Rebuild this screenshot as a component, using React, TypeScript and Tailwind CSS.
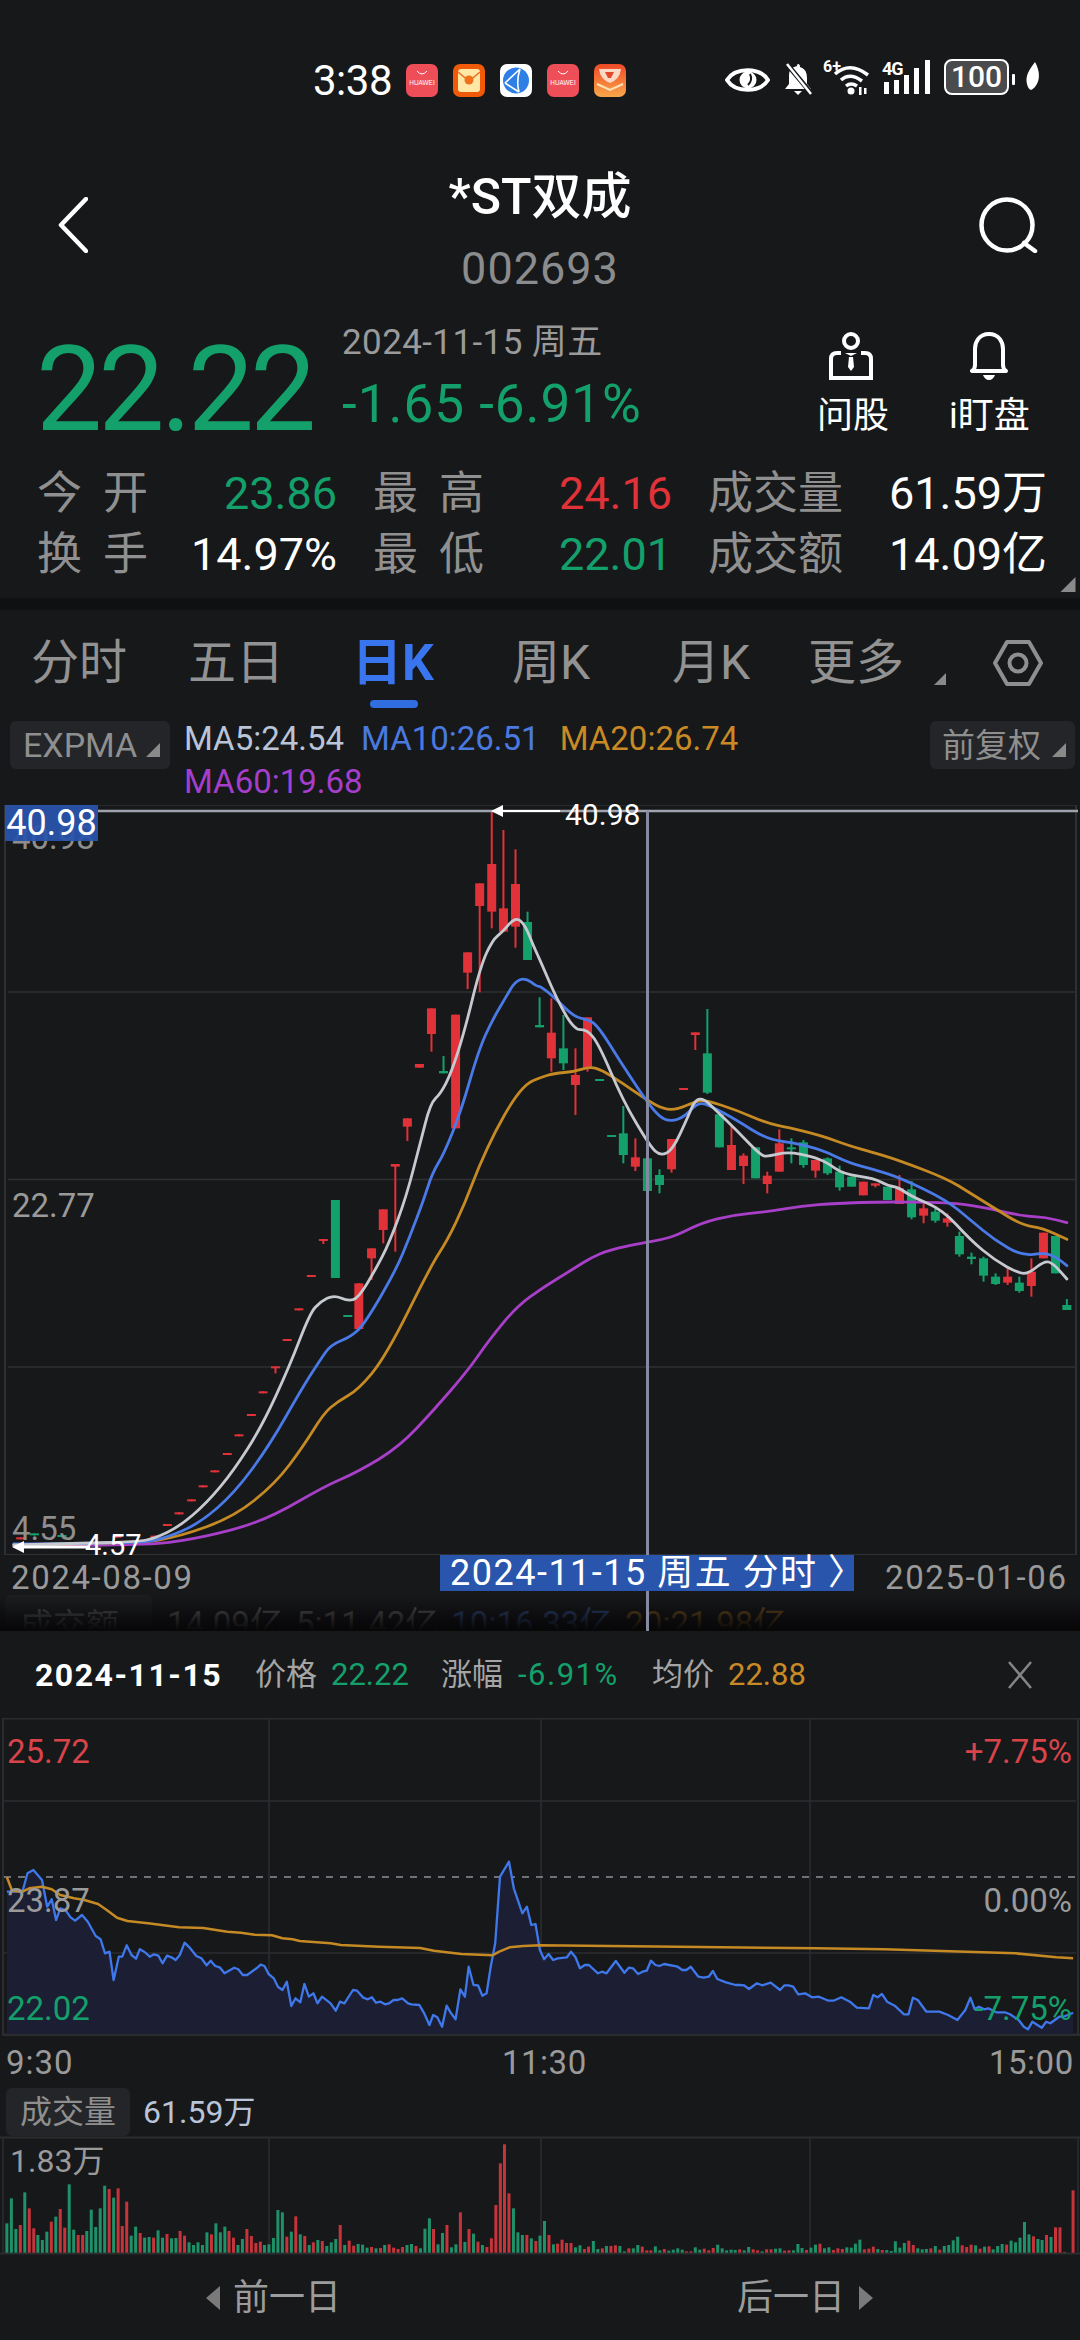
import React from "react";

type P = [number, number];
const Z3 = (x: number, y: number): P => [x / 2.904, 790 + y / 3];
const Z4 = (x: number, y: number): P => [540 + x / 2.904, 900 + y / 3];
const Z5 = (x: number, y: number): P => [x / 1.452, 1270 + y / 3];
const pts = (f: (x: number, y: number) => P, a: number[][]) => a.map(([x, y]) => f(x, y));

const smooth = (p: P[]) => {
  let d = `M${p[0][0].toFixed(1)} ${p[0][1].toFixed(1)}`;
  for (let i = 1; i < p.length - 1; i++) {
    const mx = (p[i][0] + p[i + 1][0]) / 2;
    const my = (p[i][1] + p[i + 1][1]) / 2;
    d += `Q${p[i][0].toFixed(1)} ${p[i][1].toFixed(1)} ${mx.toFixed(1)} ${my.toFixed(1)}`;
  }
  const l = p[p.length - 1];
  return d + `L${l[0].toFixed(1)} ${l[1].toFixed(1)}`;
};
const poly = (p: P[]) => "M" + p.map((q) => `${q[0].toFixed(1)} ${q[1].toFixed(1)}`).join("L");

const white = [
  ...pts(Z5, [[20,825],[120,820],[200,815],[225,805],[260,770],[300,700],[340,600],[380,470],[420,290],[450,130],[465,95],[485,75],[505,93],[520,85]]),
  ...pts(Z3, [[1090,1440],[1130,1360],[1180,1220],[1220,1060],[1250,940],[1280,910],[1310,850],[1350,720],[1395,530],[1430,450],[1460,425],[1497,380],[1525,405],[1550,470]]),
  ...pts(Z4, [[0,180],[50,300],[100,390],[135,388],[170,430],[240,600],[320,740],[350,768],[385,750],[430,650],[450,600],[475,595],[510,630],[570,690],[640,765],[660,770],[720,755],[790,770],[830,785],[880,822],[970,835],[1010,857],[1040,862],[1080,890],[1170,930],[1250,1020],[1320,1080],[1390,1120],[1420,1120],[1465,1082],[1490,1090],[1530,1137]]),
];
const blue = [
  ...pts(Z5, [[20,822],[200,820],[240,805],[290,760],[340,670],[390,530],[440,350],[465,270],[480,225],[510,200],[530,160]]),
  ...pts(Z3, [[1150,1440],[1190,1340],[1230,1230],[1255,1150],[1290,1090],[1340,960],[1390,780],[1430,690],[1470,620],[1495,575],[1525,563],[1560,590]]),
  ...pts(Z4, [[0,258],[40,290],[100,352],[140,358],[170,380],[230,480],[300,590],[345,650],[380,665],[420,650],[460,605],[500,620],[570,660],[660,718],[730,727],[820,750],[900,790],[970,808],[1050,835],[1180,900],[1250,960],[1320,1020],[1400,1068],[1465,1058],[1500,1072],[1530,1097]]),
];
const orange = [
  ...pts(Z5, [[20,825],[200,820],[260,800],[340,740],[400,640],[440,530],[470,430],[490,395],[520,360],[560,260]]),
  ...pts(Z3, [[1250,1430],[1300,1350],[1350,1240],[1390,1130],[1440,1020],[1490,930],[1530,880]]),
  ...pts(Z4, [[0,533],[40,520],[100,515],[145,500],[180,510],[240,550],[310,600],[360,628],[400,628],[450,605],[480,600],[570,630],[660,670],[720,682],[820,708],[900,738],[960,755],[1040,780],[1180,835],[1250,880],[1320,925],[1400,975],[1460,985],[1530,1018]]),
];
const purple = [
  ...pts(Z5, [[20,828],[200,825],[260,815],[340,780],[400,735],[470,650],[520,605],[580,530],[630,420],[680,300],[710,210],[750,110],[790,50]]),
  ...pts(Z4, [[100,1105],[150,1072],[200,1050],[300,1028],[350,1020],[400,1005],[470,968],[560,945],[660,935],[760,918],[860,910],[1000,905],[1190,908],[1280,920],[1400,948],[1470,952],[1530,968]]),
];

// colour, centre, wick top, body top, body bottom, wick bottom
type C = ["r" | "g", number, number, number, number, number];
const c3: C[] = [
  ["r",1428,65,222,365,415],["r",1393,280,280,348,607],["r",1462,120,355,425,425],["r",1497,178,282,410,473],
  ["g",1532,365,396,510,510],["r",1358,487,487,548,597],["r",1253,655,655,732,785],["r",1323,674,674,1015,1015],
  ["r",1218,822,822,833,833],["g",1288,798,843,850,850],["r",1183,985,985,1010,1053],["r",1148,1122,1122,1130,1385],
  ["r",1113,1258,1258,1320,1360],["r",1079,1375,1375,1405,1470],["g",974,1230,1230,1464,1464],["r",939,1347,1347,1352,1362],
  ["g",1567,622,705,712,712],
];
const c4: C[] = [
  ["r",33,295,398,475,515],["g",68,345,445,490,510],["r",103,445,525,555,645],["r",138,352,352,505,515],
  ["g",173,537,537,543,543],["g",208,705,705,711,711],["g",242,618,700,765,790],["r",277,715,772,800,813],
  ["g",312,775,775,873,873],["g",347,808,825,855,880],["r",382,717,717,808,818],["r",417,564,564,570,570],
  ["r",451,397,397,405,450],["g",486,327,460,578,582],["g",521,643,643,742,742],["r",556,675,735,810,810],
  ["r",591,760,767,798,852],["g",626,742,742,835,835],["r",660,815,827,852,880],["r",695,688,730,815,815],
  ["g",730,715,742,748,790],["g",765,720,727,795,803],["r",800,780,780,812,833],["g",835,772,775,820,825],
  ["g",870,797,815,862,872],["g",905,830,830,860,860],["r",939,845,845,886,886],["r",974,850,850,857,862],
  ["g",1009,860,860,900,900],["r",1044,825,865,912,912],["g",1079,843,868,952,958],["r",1114,910,925,947,970],
  ["g",1148,925,935,962,968],["r",1183,940,955,968,980],["g",1218,995,1008,1063,1070],["g",1253,1058,1070,1077,1093],
  ["g",1288,1070,1075,1127,1145],["g",1323,1120,1130,1152,1155],["r",1358,1105,1130,1148,1155],["g",1392,1130,1148,1173,1178],
  ["r",1427,1075,1115,1158,1190],["r",1462,998,998,1075,1075],["g",1497,1008,1008,1120,1120],["g",1530,1197,1215,1230,1230],
];
const c5: C[] = [
  ["r",521,40,40,177,177],["g",505,135,135,141,141],["r",452,15,15,21,21],["r",434,115,115,121,121],["r",417,207,207,213,213],
  ["r",400,289,289,295,310],["r",382,364,364,370,370],["r",365,432,432,438,438],["r",347,493,493,499,499],["r",330,549,549,555,555],
  ["r",312,601,601,607,607],["r",295,646,646,652,652],["r",278,688,688,694,694],["r",260,727,727,733,733],["r",243,762,762,768,768],
  ["r",225,797,797,803,803],["r",208,815,815,821,821],["r",170,797,797,803,803],["g",90,795,795,801,801],["g",50,790,790,796,796],["r",30,802,802,808,808],
];
const candles = [
  ...c3.map((c) => ({ c, f: Z3 })),
  ...c4.map((c) => ({ c, f: Z4 })),
  ...c5.map((c) => ({ c, f: Z5 })),
].map(({ c, f }) => {
  const [cx, wt] = f(c[1], c[2]);
  return { col: c[0] === "r" ? "#e03238" : "#13a06b", cx, wt, bt: f(0, c[3])[1], bb: f(0, c[4])[1], wb: f(0, c[5])[1] };
});

const blueIntra = [
  ...pts((x, y) => [x / 2.904, 1860 + y / 3], [[20,95],[40,95],[65,95],[80,40],[97,30],[122,60],[137,140],[150,118],[163,180],[175,145],[190,150],[205,172],[218,182],[238,165],[255,185],[278,228],[292,238],[305,280],[318,275],[330,360],[345,290],[355,290],[368,256],[382,285],[395,296],[406,268],[420,276],[435,290],[447,283],[460,287],[472,310],[485,287],[498,292],[510,300],[522,285],[536,248],[550,262],[570,288],[585,295],[600,316],[612,302],[625,318],[638,322],[652,340],[680,323],[692,328],[705,345],[718,345],[745,325],[757,314],[768,318],[780,342],[795,355],[807,380],[820,390],[833,365],[846,438],[858,415],[872,427],[884,372],[897,410],[910,400],[922,430],[935,410],[960,430],[975,452],[987,425],[1000,430],[1025,390],[1037,392],[1055,413],[1068,418],[1080,412],[1092,428],[1105,425],[1118,433],[1130,430],[1143,420],[1155,420],[1168,415],[1185,430],[1195,433],[1218,435],[1232,460],[1247,495],[1258,465],[1270,472],[1284,500],[1297,437],[1310,460],[1323,478],[1337,388],[1350,410],[1361,320],[1375,375],[1388,376],[1401,407],[1413,400],[1425,320],[1438,250],[1452,50],[1478,5],[1492,85],[1517,160],[1530,140],[1543,195],[1555,192],[1568,270]]),
  ...pts((x, y) => [540 + x / 2.904, 1860 + y / 3], [[12,298],[25,282],[38,300],[52,295],[78,292],[90,275],[103,292],[116,325],[130,315],[142,315],[168,340],[180,335],[193,340],[220,303],[245,338],[258,323],[270,325],[285,342],[298,335],[310,332],[322,302],[335,315],[347,318],[360,312],[400,320],[413,330],[425,330],[438,320],[460,350],[475,353],[490,350],[502,333],[515,357],[540,367],[568,375],[580,375],[592,376],[607,387],[630,370],[645,376],[670,368],[697,390],[710,376],[722,376],[735,380],[750,403],[770,400],[790,412],[810,410],[838,422],[852,422],[875,412],[900,425],[920,443],[955,445],[968,405],[980,412],[993,402],[1008,425],[1030,437],[1057,463],[1070,463],[1083,413],[1097,420],[1122,455],[1160,455],[1185,465],[1212,480],[1235,450],[1250,413],[1262,447],[1275,440],[1290,448],[1302,445],[1325,457],[1350,457],[1365,463],[1390,480],[1405,500],[1417,508],[1430,485],[1457,503],[1470,485],[1482,490],[1508,470],[1520,470],[1548,458]]),
];
const orangeIntra = [
  ...pts((x, y) => [x / 2.904, 1860 + y / 3], [[20,52],[35,92],[65,95],[85,85],[122,80],[150,88],[175,105],[215,115],[245,120],[285,132],[310,150],[340,173],[370,183],[430,190],[520,202],[590,204],[660,215],[700,218],[740,224],[790,226],[820,235],[850,238],[870,243],[960,250],[990,255],[1100,260],[1220,264],[1260,272],[1340,282],[1430,286],[1450,275],[1480,262],[1520,258],[1568,256]]),
  ...pts((x, y) => [540 + x / 2.904, 1860 + y / 3], [[400,260],[800,265],[1000,268],[1380,280],[1500,292],[1548,295]]),
];

const volL = "20g265 33g190 46g282 59r270 72g172 85r220 98r280 110g300 123g315 136g290 149r260 162g245 175r222 188r278 201g148 214g284 227r300 240r300 252g288 265g224 278g276 291g220 304g152 317r162 330g188 343r160 355r273 368r200 381g302 394g275 407r294 420g308 433g306 446r308 459g286 472g308 485r297 498g310 511g309 523r288 536r302 549g322 562g330 575g322 588g330 601g292 614r298 627g265 640g292 653g275 665r288 678r308 691g330 704g312 717r282 730r303 743r324 756r320 768g330 781g328 794g309 807g225 820g232 833r305 846g290 859r244 872g298 885r303 898g330 910r322 923g315 936r318 949g333 962g322 975g312 988r270 1001g330 1014r317 1027r332 1040g327 1053g329 1066g338 1079r336 1092g340 1105r339 1117g330 1130r328 1143r338 1156r342 1169r336 1182g330 1195g327 1208r333 1221g340 1234g281 1247g250 1259r282 1272g328 1285g294 1298r270 1311g337 1324g328 1337r232 1350g321 1362r282 1375g296 1388r320 1401g330 1414r336 1427r310 1440r210 1453r85 1465r28 1478r175 1491g220 1504g292 1517g300 1530r300 1543g310 1556r318";
const volR = "0g302 13g258 26r300 39g328 51r326 64r314 77r324 90r324 103g337 116g331 129r342 141r335 155g318 168g342 181r340 193g333 206r333 219r331 232g333 245g349 258r340 271g340 284g330 297r335 310r346 322r346 335g334 348g346 361r342 374g347 387g344 400g340 413g344 425r349 438r349 451g337 464g344 477r341 490r346 503r339 516g329 529g340 542g346 555g344 567g345 580r343 593g346 606g336 619r343 632r346 645g349 658r343 671r343 684g341 697g340 710r347 723r346 736g346 749g327 761g339 774r345 787g338 800g329 813r326 826g340 839g337 852r345 865r340 878r342 891g337 904g338 916g326 929g314 942r343 955r341 968r335 981g342 994r345 1007g345 1020g348 1032g319 1045g338 1058g324 1071r317 1084r330 1097g340 1110g343 1122g342 1135r340 1148g333 1161r344 1174g333 1187g330 1200g316 1213g305 1226r331 1239r336 1252r329 1265g331 1278r341 1291g335 1304r334 1316g343 1329g333 1342g327 1355r329 1368g317 1381g322 1394g308 1407g261 1420g298 1433r304 1446g312 1458g315 1471r300 1484g306 1497r277 1510r277 1523r351 1548r166";
const parseVol = (s: string, off: number) =>
  s.split(" ").map((t) => {
    const m = t.match(/(\d+)([rg])(\d+)/)!;
    return { x: off + Number(m[1]) / 2.904, col: m[2] === "r" ? "#c5343b" : "#1f9169", y: 2135 + Number(m[3]) / 3 };
  });
const vols = [...parseVol(volL, 0), ...parseVol(volR, 540)];

const Corner = ({ className }: { className: string }) => (
  <svg viewBox="0 0 14 14" className={className}><path d="M14 0V14H0Z" fill="#8a8a8a" /></svg>
);

const Huawei = () => (
  <svg viewBox="0 0 32 33" className="h-[33px] w-[32px]">
    <rect width="32" height="33" rx="7" fill="#ee4e58" />
    <path d="M11 7q5 6 10 0" stroke="#fff" strokeWidth="1" fill="none" />
    <text x="16" y="21" fontSize="6.4" fill="#fff" textAnchor="middle" fontFamily="Liberation Sans, sans-serif">HUAWEI</text>
  </svg>
);

const StatusBar = () => (
  <div className="flex h-[130px] items-start pl-[313px] pt-[62px]">
    <span className="w-[93px] shrink-0 text-[42px] leading-[38px] tracking-[-0.5px] text-white">3:38</span>
    <div className="flex w-[319px] shrink-0 gap-[15px] pt-[2px]">
      <Huawei />
      <svg viewBox="0 0 32 33" className="h-[33px] w-[32px]">
        <rect width="32" height="33" rx="7" fill="#f05a08" />
        <rect x="5" y="5" width="22" height="23" rx="3" fill="#ffe7a6" />
        <path d="M5 8l11 9 11-9" stroke="#e96c1c" strokeWidth="1.4" fill="none" />
        <circle cx="16" cy="16" r="4.5" fill="#f0701c" />
      </svg>
      <svg viewBox="0 0 32 33" className="h-[33px] w-[32px]">
        <rect width="32" height="33" rx="7" fill="#fff" />
        <circle cx="16" cy="16.500" r="13" fill="#2f80e6" />
        <path d="M5 19l15-14M5 19l14 9M20 5q-4 12 -1 23" stroke="#fff" strokeWidth="1.6" fill="none" />
      </svg>
      <Huawei />
      <svg viewBox="0 0 32 33" className="h-[33px] w-[32px]">
        <defs><linearGradient id="sg" x1="0" y1="0" x2="0" y2="1"><stop offset="0" stopColor="#ee4a26" /><stop offset="1" stopColor="#f9a74a" /></linearGradient></defs>
        <rect width="32" height="33" rx="7" fill="url(#sg)" />
        <path d="M5 5h22q-1 10-11 14Q6 15 5 5Z" fill="#fbd9c4" />
        <path d="M11 8h9l-3 6h-3Z" fill="#e2482a" />
        <path d="M3 20l13 6 13-6" stroke="#ffe3b8" strokeWidth="2" fill="none" />
      </svg>
    </div>
    <svg viewBox="0 0 45 30" className="mt-[3px] h-[30px] w-[45px] shrink-0">
      <path d="M2 15C10 2 35 2 43 15 35 28 10 28 2 15Z" fill="none" stroke="#fff" strokeWidth="4" />
      <circle cx="23" cy="15" r="8.500" fill="#fff" />
      <path d="M25 9q3 6 -2 11" stroke="#17181a" strokeWidth="2" fill="none" />
    </svg>
    <svg viewBox="0 0 30 34" className="ml-[12px] mt-[0px] h-[34px] w-[32px] shrink-0">
      <path d="M15 2q2 0 2 3q7 2 7 11v6l4 5H2l4-5V13q0-7 8-9q0-2 1-2Z" fill="#fff" />
      <path d="M11 29h8l-4 4Z" fill="#fff" />
      <path d="M3 1l25 30" stroke="#17181a" strokeWidth="5" />
      <path d="M4 2l24 30" stroke="#fff" strokeWidth="2.500" />
    </svg>
    <svg viewBox="0 0 48 38" className="ml-[9px] mt-[-4px] h-[38px] w-[48px] shrink-0">
      <text x="0" y="14" fontSize="16" fontWeight="700" fill="#fff" fontFamily="Roboto, sans-serif">6+</text>
      <path d="M12 16q15-13 33 1M18 22q9-8 21 1M23 28q5-4 11 0" stroke="#fff" strokeWidth="3.500" fill="none" />
      <circle cx="28" cy="33" r="3.500" fill="#fff" />
      <path d="M36 29h2.500v8h-2.500ZM41 30h2.500v6h-2.500Z" fill="#fff" />
    </svg>
    <div className="relative ml-[11px] mt-[-3px] h-[35px] w-[49px] shrink-0">
      <span className="absolute left-0 top-[1px] text-[18px] leading-[18px] font-bold tracking-[-1px] text-white">4G</span>
      <svg viewBox="0 0 49 35" className="h-[35px] w-[49px]">
        <path d="M2 23h5v12H2ZM12 21h5v14h-5ZM22 16h5v19h-5ZM32 9h5v26h-5ZM43 1h5v34h-5Z" fill="#fff" />
      </svg>
    </div>
    <div className="ml-[13px] mt-[-3px] flex h-[36px] w-[65px] shrink-0 items-center justify-center rounded-[8px] border-2 border-white bg-[#4a4b4d] text-[30px] leading-none font-medium text-white">100</div>
    <div className="ml-[3px] mt-[12px] h-[11px] w-[3px] shrink-0 rounded-[1px] bg-white" />
    <svg viewBox="0 0 16 30" className="ml-[10px] mt-[0px] h-[30px] w-[16px] shrink-0">
      <path d="M10 0C4 8 0 14 2 22q1 5 4 6C14 24 17 12 10 0Z" fill="#fff" />
    </svg>
  </div>
);

const Nav = () => (
  <div className="flex h-[160px] items-start justify-between pl-[58px] pr-[42px] pt-[41px]">
    <svg viewBox="0 0 30 56" className="mt-[26px] h-[56px] w-[30px]"><path d="M28 2L3 28l25 26" fill="none" stroke="#fff" strokeWidth="4.500" strokeLinecap="round" strokeLinejoin="round" /></svg>
    <div className="ml-[14px] flex flex-col items-center">
      <div className="h-[52px] text-[50px] leading-[52px] font-medium text-white">*ST双成</div>
      <div className="mt-[23px] text-[45px] leading-[45px] tracking-[1px] text-[#8b8c8e]">002693</div>
    </div>
    <svg viewBox="0 0 60 56" className="mt-[26px] h-[56px] w-[60px]">
      <circle cx="29" cy="28" r="25.500" fill="none" stroke="#fff" strokeWidth="4.500" />
      <path d="M46 46l11 8" stroke="#fff" strokeWidth="4.500" strokeLinecap="round" />
    </svg>
  </div>
);

const Quote = () => (
  <div className="flex h-[170px] pl-[36px]">
    <div className="w-[306px] shrink-0 pt-[40px] text-[118px] leading-[120px] tracking-[-4px] text-[#13a06b]">22.22</div>
    <div className="w-[473px] shrink-0">
      <div className="mt-[35px] h-[36px] text-[35px] leading-[36px] tracking-[0.4px] text-[#9a9a9a]">2024-11-15 周五</div>
      <div className="mt-[16px] text-[53px] leading-[54px] tracking-[1px] text-[#13a06b]">-1.65 -6.91%</div>
    </div>
    <div className="flex w-[134px] shrink-0 flex-col pt-[42px] pl-[2px]">
      <svg viewBox="0 0 44 48" className="ml-[12px] h-[48px] w-[44px]">
        <circle cx="22" cy="9" r="7" fill="none" stroke="#fff" strokeWidth="4" />
        <path d="M12 21H8q-6 0-6 6v19h40V27q0-6-6-6h-4" fill="none" stroke="#fff" strokeWidth="4" />
        <path d="M16 21h12l-6 3Z" fill="#fff" />
        <path d="M20 25h4l1 10-3 4-3-4Z" fill="#fff" />
      </svg>
      <div className="mt-[18px] text-[36px] leading-[36px] text-white">问股</div>
    </div>
    <div className="flex shrink-0 flex-col items-center pt-[42px]">
      <svg viewBox="0 0 38 48" className="h-[48px] w-[38px]">
        <path d="M19 2C9 2 5 10 5 17v16q0 4-3 6h34q-3-2-3-6V17C33 10 29 2 19 2Z" fill="none" stroke="#fff" strokeWidth="4" strokeLinejoin="round" />
        <path d="M13 43h12q-2 5-6 5t-6-5Z" fill="#fff" />
      </svg>
      <div className="mt-[18px] text-[36px] leading-[36px] text-white">i盯盘</div>
    </div>
  </div>
);

const SpacedLabel = ({ a, b }: { a: string; b: string }) => (
  <span className="flex w-[111px] shrink-0 justify-between text-[#909090]"><span>{a}</span><span>{b}</span></span>
);

const Stats = () => (
  <div className="relative h-[138px] pt-[3px] text-[45px] leading-[61px]">
    <div className="flex h-[61px] pl-[37px]">
      <SpacedLabel a="今" b="开" />
      <span className="w-[189px] shrink-0 text-right text-[#13a06b]">23.86</span>
      <span className="ml-[36px] flex"><SpacedLabel a="最" b="高" /></span>
      <span className="w-[188px] shrink-0 text-right text-[#e03238]">24.16</span>
      <span className="ml-[36px] w-[136px] shrink-0 text-[#909090]">成交量</span>
      <span className="w-[203px] shrink-0 text-right text-white">61.59万</span>
    </div>
    <div className="flex h-[61px] pl-[37px]">
      <SpacedLabel a="换" b="手" />
      <span className="w-[189px] shrink-0 text-right text-white">14.97%</span>
      <span className="ml-[36px] flex"><SpacedLabel a="最" b="低" /></span>
      <span className="w-[188px] shrink-0 text-right text-[#13a06b]">22.01</span>
      <span className="ml-[36px] w-[136px] shrink-0 text-[#909090]">成交额</span>
      <span className="w-[203px] shrink-0 text-right text-white">14.09亿</span>
    </div>
    <Corner className="absolute bottom-[6px] right-[4px] h-[15px] w-[16px]" />
  </div>
);

const Tabs = () => (
  <div className="flex h-[106px] items-start pl-[31px] pt-[29px] text-[48px] leading-[48px] text-[#929292]">
    <span className="w-[157px] shrink-0">分时</span>
    <span className="w-[164px] shrink-0">五日</span>
    <span className="relative w-[160px] shrink-0 text-[50px] font-bold text-[#3a75f0]">
      日K
      <span className="absolute left-[18px] top-[61px] h-[8px] w-[48px] rounded-full bg-[#2f6de0]" />
    </span>
    <span className="w-[160px] shrink-0">周K</span>
    <span className="w-[136px] shrink-0">月K</span>
    <span className="w-[126px] shrink-0">更多</span>
    <Corner className="mt-[34px] h-[12px] w-[12px] shrink-0" />
    <svg viewBox="0 0 50 46" className="ml-[47px] mt-[1px] h-[46px] w-[50px] shrink-0">
      <path d="M14 2h22l12 21-12 21H14L2 23Z" fill="none" stroke="#8f8f8f" strokeWidth="4" strokeLinejoin="round" />
      <circle cx="25" cy="23" r="8.500" fill="none" stroke="#8f8f8f" strokeWidth="4" />
    </svg>
  </div>
);

const Indicators = () => (
  <div className="flex h-[89px] items-start pl-[10px] pt-[5px]">
    <div className="relative flex h-[48px] w-[160px] shrink-0 items-center rounded-[6px] bg-[#232528] pl-[13px] text-[34px] leading-none text-[#8f8f8f]">
      EXPMA
      <Corner className="absolute right-[10px] top-[22px] h-[14px] w-[14px]" />
    </div>
    <div className="ml-[14px] flex w-[600px] shrink-0 flex-wrap text-[33px] leading-[43px]">
      <span className="mr-[17px] mt-[-4px] text-[#b9c4d8]">MA5:24.54</span>
      <span className="mr-[20px] mt-[-4px] text-[#4a7ae0]">MA10:26.51</span>
      <span className="mt-[-4px] text-[#c98a25]">MA20:26.74</span>
      <span className="w-full text-[#a53ecb]">MA60:19.68</span>
    </div>
    <div className="relative ml-[146px] flex h-[48px] w-[145px] shrink-0 items-center rounded-[6px] bg-[#232528] pl-[12px] text-[33px] leading-none text-[#8f8f8f]">
      前复权
      <Corner className="absolute right-[9px] top-[22px] h-[14px] w-[14px]" />
    </div>
  </div>
);

const KChart = () => (
  <div className="relative h-[750px]">
    <svg viewBox="0 805 1080 750" className="block h-[750px] w-[1080px]">
      <path d="M5 805H1076M8 992H1075M8 1179.500H1075M8 1367H1075" stroke="#2e3033" strokeWidth="1.500" fill="none" />
      <path d="M5 805V1555H1076V805" stroke="#2e3033" strokeWidth="2" fill="none" />
      {candles.map((c, i) => (
        <g key={i} fill={c.col}>
          <rect x={c.cx - 1} y={c.wt} width="2" height={Math.max(c.wb - c.wt, 0)} />
          <rect x={c.cx - 4.500} y={c.bt} width="9" height={Math.max(c.bb - c.bt, 2)} />
        </g>
      ))}
      <path d={smooth(purple)} stroke="#a83fc8" strokeWidth="2.800" fill="none" strokeLinecap="round" />
      <path d={smooth(orange)} stroke="#c68a24" strokeWidth="2.800" fill="none" strokeLinecap="round" />
      <path d={smooth(blue)} stroke="#4a7ae8" strokeWidth="2.800" fill="none" strokeLinecap="round" />
      <path d={smooth(white)} stroke="#c6c9d0" strokeWidth="2.800" fill="none" strokeLinecap="round" />
      <path d="M98 811H1078" stroke="#9fa3ae" strokeWidth="2.500" />
      <path d="M503 811H560" stroke="#fff" strokeWidth="2" />
      <path d="M491 811l12-6v12Z" fill="#fff" />
      <path d="M24 1547H90" stroke="#fff" strokeWidth="3" />
      <path d="M12 1547l12-6v12Z" fill="#fff" />
    </svg>
    <span className="absolute left-[12px] top-[16px] text-[33px] leading-[33px] text-[#8e8e8e]">40.98</span>
    <span className="absolute left-[5px] top-0 flex h-[36px] w-[93px] items-center justify-center bg-[#2a55acee] text-[36px] leading-none text-white">40.98</span>
    <span className="absolute left-[565px] top-[-5px] text-[30px] leading-[30px] text-white">40.98</span>
    <span className="absolute left-[12px] top-[384px] text-[33px] leading-[33px] text-[#9a9a9a]">22.77</span>
    <span className="absolute left-[12px] top-[707px] text-[33px] leading-[33px] text-[#8e8e8e]">4.55</span>
    <span className="absolute left-[85px] top-[726px] text-[29px] leading-[29px] text-white">4.57</span>
  </div>
);

const DateRow = () => (
  <div className="flex h-[40px] items-start pl-[11px] text-[33px] leading-[36px] tracking-[1.6px] text-[#9a9a9a]">
    <span className="w-[429px] shrink-0 pt-[5px]">2024-08-09</span>
    <span className="relative z-10 flex h-[36px] w-[414px] shrink-0 items-center whitespace-nowrap bg-[#2a55ac] pl-[10px] text-[36px] leading-none tracking-[1.5px] text-white">2024-11-15 周五 分时 〉</span>
    <span className="ml-[31px] shrink-0 pt-[5px]">2025-01-06</span>
  </div>
);

const Faded = () => (
  <div className="relative flex h-[36px] items-start overflow-hidden pl-[5px] text-[33px] leading-[33px]">
    <div className="flex h-[48px] w-[147px] shrink-0 items-center rounded-[6px] bg-[#232528] pl-[15px] pt-[12px] text-[#8f8f8f]">成交额</div>
    <div className="ml-[15px] flex gap-[13px] pt-[12px]">
      <span className="text-[#9a9a9a]">14.09亿</span>
      <span className="text-[#9a9a9a]">5:11.42亿</span>
      <span className="text-[#4a7ae0]">10:16.33亿</span>
      <span className="text-[#c98a25]">20:21.98亿</span>
    </div>
    <div className="absolute inset-0 bg-gradient-to-b from-[#17181a88] to-[#060607]" />
  </div>
);

const PanelHeader = () => (
  <div className="flex h-[87px] items-center pl-[35px] text-[31px] leading-none">
    <span className="w-[220px] shrink-0 text-[32px] font-bold tracking-[1.5px] text-white">2024-11-15</span>
    <span className="w-[76px] shrink-0 text-[#a5a5a5]">价格</span>
    <span className="w-[110px] shrink-0 text-[#13a06b]">22.22</span>
    <span className="w-[77px] shrink-0 text-[#a5a5a5]">涨幅</span>
    <span className="w-[134px] shrink-0 tracking-[1.5px] text-[#13a06b]">-6.91%</span>
    <span className="w-[76px] shrink-0 text-[#a5a5a5]">均价</span>
    <span className="w-[279px] shrink-0 text-[#c98a25]">22.88</span>
    <svg viewBox="0 0 26 30" className="h-[30px] w-[26px] shrink-0"><path d="M2 2l22 26M24 2L2 28" stroke="#858585" strokeWidth="2.500" /></svg>
  </div>
);

const IntraChart = () => {
  const area = `${poly(blueIntra)}L1073 2034L7 2034Z`;
  return (
    <div className="relative h-[318px]">
      <svg viewBox="0 1718 1080 318" className="block h-[318px] w-[1080px]">
        <path d="M2 1718H1080M2 2035H1080" stroke="#2a2c2f" strokeWidth="3" fill="none" />
        <path d="M3 1718V2035M1078 1718V2035" stroke="#2a2c2f" strokeWidth="2" fill="none" />
        <path d="M4 1801H1076M4 1953H1076M269 1718V2035M541 1718V2035M810 1718V2035" stroke="#2b2d30" strokeWidth="1.500" fill="none" />
        <path d="M4 1877H1076" stroke="#8d9099" strokeWidth="1.500" strokeDasharray="7 7" fill="none" />
        <path d={area} fill="#1c1e33" />
        <path d={poly(blueIntra)} stroke="#3f78ea" strokeWidth="2.300" fill="none" strokeLinejoin="round" />
        <path d={poly(orangeIntra)} stroke="#c68a24" strokeWidth="2.500" fill="none" strokeLinejoin="round" />
      </svg>
      <span className="absolute left-[7px] top-[17px] text-[33px] leading-[33px] text-[#d9444a]">25.72</span>
      <span className="absolute right-[8px] top-[17px] text-[33px] leading-[33px] text-[#d9444a]">+7.75%</span>
      <span className="absolute left-[7px] top-[166px] text-[33px] leading-[33px] text-[#9a9a9a]">23.87</span>
      <span className="absolute right-[8px] top-[166px] text-[33px] leading-[33px] text-[#9a9a9a]">0.00%</span>
      <span className="absolute left-[7px] top-[274px] text-[33px] leading-[33px] text-[#13a06b]">22.02</span>
      <span className="absolute right-[8px] top-[274px] text-[33px] leading-[33px] text-[#13a06b]">-7.75%</span>
    </div>
  );
};

const TimeRow = () => (
  <div className="flex h-[52px] items-center pl-[6px] text-[33px] leading-none text-[#9a9a9a]">
    <span className="w-[496px] shrink-0 tracking-[1px]">9:30</span>
    <span className="w-[487px] shrink-0 tracking-[0.5px]">11:30</span>
    <span className="shrink-0 tracking-[0.5px]">15:00</span>
  </div>
);

const VolHeader = () => (
  <div className="flex h-[48px] items-center pl-[6px] text-[32px] leading-none">
    <span className="flex h-[48px] w-[124px] shrink-0 items-center justify-center rounded-[6px] bg-[#232528] text-[#8f8f8f]">成交量</span>
    <span className="ml-[13px] text-[#b9c4d8]">61.59万</span>
  </div>
);

const VolChart = () => (
  <div className="relative h-[119px]">
    <svg viewBox="0 2136 1080 119" className="block h-[119px] w-[1080px]">
      <path d="M0 2137.500H1080M0 2253.500H1080" stroke="#2a2c2f" strokeWidth="2" fill="none" />
      <path d="M3 2138V2253M269 2138V2253M541 2138V2253M810 2138V2253M1078 2138V2253" stroke="#2b2d30" strokeWidth="1.500" fill="none" />
      {vols.map((v, i) => (
        <rect key={i} x={v.x - 1.500} y={v.y} width="3" height={Math.max(2252.700 - v.y, 0)} fill={v.col} />
      ))}
    </svg>
    <span className="absolute left-[10px] top-[9px] text-[32px] leading-[32px] text-[#9a9a9a]">1.83万</span>
  </div>
);

const DayNav = () => (
  <div className="flex h-[85px] items-center text-[36px] leading-none text-[#9c9c9c]">
    <svg viewBox="0 0 14 24" className="ml-[206px] h-[24px] w-[14px] shrink-0"><path d="M14 0V24L0 12Z" fill="#7a7a7a" /></svg>
    <span className="ml-[13px] w-[504px] shrink-0">前一日</span>
    <span className="w-[122px] shrink-0">后一日</span>
    <svg viewBox="0 0 14 24" className="h-[24px] w-[14px] shrink-0"><path d="M0 0V24L14 12Z" fill="#7a7a7a" /></svg>
  </div>
);

export default function App() {
  return (
    <div className="h-[2340px] w-[1080px] overflow-hidden bg-[#17181a] font-['Roboto','Noto_Sans_CJK_SC',sans-serif]">
      <StatusBar />
      <Nav />
      <Quote />
      <Stats />
      <div className="h-[12px] bg-[#0f1012]" />
      <Tabs />
      <Indicators />
      <div className="relative">
        <KChart />
        <DateRow />
        <Faded />
        <div className="absolute bottom-0 left-[646px] top-[6px] w-[2.5px] bg-[#858aa0]" />
      </div>
      <PanelHeader />
      <IntraChart />
      <TimeRow />
      <VolHeader />
      <VolChart />
      <DayNav />
    </div>
  );
}
